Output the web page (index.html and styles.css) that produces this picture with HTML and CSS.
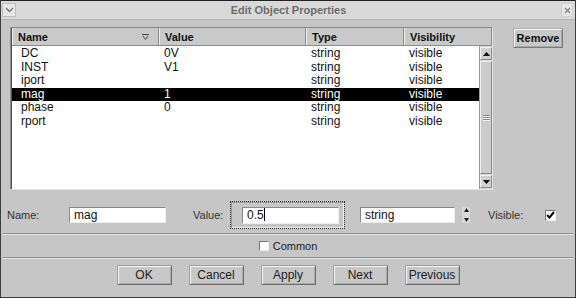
FILE: index.html
```html
<!DOCTYPE html>
<html lang="en">
<head>
  <meta charset="UTF-8">
  <title>Edit Object Properties</title>
  <link rel="stylesheet" href="styles.css">
</head>
<body>
  <div class="window">
    <div class="titlebar">
      <span class="tb-btn">
        <svg width="9" height="6" viewBox="0 0 9 6"><path d="M1 1 L4.5 4.5 L8 1" fill="none" stroke="#777" stroke-width="1.4"/></svg>
      </span>
      <span class="title">Edit Object Properties</span>
      <span class="tb-btn close">
        <svg width="7" height="7" viewBox="0 0 7 7"><path d="M1 1 L6 6 M6 1 L1 6" stroke="#888" stroke-width="1.3"/></svg>
      </span>
    </div>

    <div class="content">
      <div class="top-row">
        <div class="table">
          <div class="thead">
            <div class="th th-name">Name
              <svg class="sort" width="7" height="6" viewBox="0 0 7 6"><path d="M0 0.5 H7 M1 2 L3.5 5.5 L6 2" fill="none" stroke="#444" stroke-width="1"/></svg>
            </div>
            <div class="th">Value</div>
            <div class="th">Type</div>
            <div class="th last">Visibility</div>
          </div>
          <div class="tbody">
            <div class="rows">
              <div class="row"><span class="c-name">DC</span><span>0V</span><span>string</span><span>visible</span></div>
              <div class="row"><span class="c-name">INST</span><span>V1</span><span>string</span><span>visible</span></div>
              <div class="row"><span class="c-name">iport</span><span></span><span>string</span><span>visible</span></div>
              <div class="row selected"><span class="c-name">mag</span><span>1</span><span>string</span><span>visible</span></div>
              <div class="row"><span class="c-name">phase</span><span>0</span><span>string</span><span>visible</span></div>
              <div class="row"><span class="c-name">rport</span><span></span><span>string</span><span>visible</span></div>
            </div>
            <div class="scrollbar">
              <div class="sb-arrow">
                <svg width="7" height="4" viewBox="0 0 7 4"><path d="M0 4 L3.5 0 L7 4 Z" fill="#000"/></svg>
              </div>
              <div class="sb-thumb">
                <span class="grip"></span><span class="grip"></span><span class="grip"></span>
              </div>
              <div class="sb-arrow">
                <svg width="7" height="4" viewBox="0 0 7 4"><path d="M0 0 L3.5 4 L7 0 Z" fill="#000"/></svg>
              </div>
            </div>
          </div>
        </div>
        <button class="btn remove">Remove</button>
      </div>

      <div class="fields">
        <label class="lbl lbl-name">Name:</label>
        <div class="input name-input">mag</div>
        <label class="lbl lbl-value">Value:</label>
        <div class="focus-frame">
          <div class="input value-input">0.5<span class="caret"></span></div>
        </div>
        <div class="input type-input">string</div>
        <div class="spin">
          <svg width="5" height="4" viewBox="0 0 5 4"><path d="M0 4 L2.5 0 L5 4 Z" fill="#222"/></svg>
          <svg width="5" height="4" viewBox="0 0 5 4"><path d="M0 0 L2.5 4 L5 0 Z" fill="#222"/></svg>
        </div>
        <label class="lbl lbl-visible">Visible:</label>
        <span class="check">
          <svg width="9" height="8" viewBox="0 0 9 8"><path d="M1 4 L3.5 6.5 L8 1" fill="none" stroke="#000" stroke-width="2"/></svg>
        </span>
      </div>

      <div class="sep"></div>

      <div class="common-row">
        <span class="box"></span>
        <span>Common</span>
      </div>

      <div class="sep"></div>

      <div class="buttons">
        <button class="btn">OK</button>
        <button class="btn">Cancel</button>
        <button class="btn">Apply</button>
        <button class="btn">Next</button>
        <button class="btn">Previous</button>
      </div>
    </div>
  </div>
</body>
</html>
```

FILE: styles.css
```css
body {
  margin: 0;
  font-family: "Liberation Sans", Arial, sans-serif;
  color: #222;
  background: #c6c6c6;
}

.window {
  width: 576px;
  height: 298px;
  box-sizing: border-box;
  border: 1px solid #3c3c3c;
  border-top-color: #222;
  background: #c6c6c6;
  display: flex;
  flex-direction: column;
}

.titlebar {
  height: 18px;
  background: #d9d9d9;
  border-bottom: 1px solid #b4b4b4;
  display: flex;
  align-items: center;
  justify-content: space-between;
  padding: 0 2px 0 1px;
}

.tb-btn {
  width: 14px;
  height: 14px;
  box-sizing: border-box;
  border: 1px solid #bdbdbd;
  background: #e6e6e6;
  display: flex;
  align-items: center;
  justify-content: center;
}

.tb-btn.close {
  width: 12px;
  border-color: #d0d0d0;
}

.title {
  font-size: 11px;
  font-weight: bold;
  color: #6c6c6c;
}

.content {
  padding: 0 6px;
  flex: 1;
  display: flex;
  flex-direction: column;
}

/* list + remove */
.top-row {
  display: flex;
  align-items: flex-start;
  margin-top: 7px;
}

.table {
  width: 483px;
  height: 163px;
  margin-left: 3px;
  box-sizing: border-box;
  border: 1px solid #8a8a8a;
  border-right-color: #e4e4e4;
  border-bottom-color: #e4e4e4;
  box-shadow: inset 1px 1px 0 #555;
  display: flex;
  flex-direction: column;
  background: #fff;
}

.thead {
  display: grid;
  grid-template-columns: 147px 147px 98px 1fr;
  height: 17px;
  background: #c9c9c9;
  border-bottom: 1px solid #8c8c8c;
  margin-left: 1px;
}

.th {
  font-size: 11px;
  font-weight: bold;
  color: #111;
  padding-left: 5px;
  display: flex;
  align-items: center;
  border-left: 1px solid #ececec;
  border-right: 1px solid #8c8c8c;
}

.th-name {
  justify-content: space-between;
  padding-right: 9px;
}

.sort {
  margin-top: 1px;
}

.tbody {
  flex: 1;
  display: flex;
  min-height: 0;
}

.rows {
  flex: 1;
  padding-top: 1px;
  margin-left: 1px;
}

.row {
  display: grid;
  grid-template-columns: 147px 147px 98px 1fr;
  height: 13.5px;
  font-size: 12px;
  line-height: 13.5px;
  color: #111;
}

.row span {
  padding-left: 5px;
  white-space: nowrap;
}

.row .c-name {
  padding-left: 9px;
}

.row.selected {
  background: #000;
  color: #fff;
}

.scrollbar {
  width: 13px;
  box-sizing: border-box;
  border-left: 1px solid #9a9a9a;
  background: #d6d6d6;
  display: flex;
  flex-direction: column;
  padding: 1px 0;
}

.sb-arrow {
  height: 11px;
  display: flex;
  align-items: center;
  justify-content: center;
  background: #d0d0d0;
  border: 1px solid;
  border-color: #f2f2f2 #8a8a8a #8a8a8a #f2f2f2;
}

.sb-thumb {
  flex: 1;
  background: #cbcbcb;
  border: 1px solid;
  border-color: #f0f0f0 #8a8a8a #8a8a8a #f0f0f0;
  margin: 1px 0;
  display: flex;
  flex-direction: column;
  align-items: center;
  justify-content: center;
  gap: 1px;
}

.grip {
  width: 7px;
  height: 1px;
  background: #8a8a8a;
  box-shadow: 0 1px 0 #f0f0f0;
}

.btn {
  font-family: "Liberation Sans", Arial, sans-serif;
  font-size: 12px;
  color: #222;
  background: #c8c8c8;
  border: 1px solid;
  border-color: #9c9c9c #6e6e6e #6e6e6e #9c9c9c;
  box-shadow: inset 1px 1px 0 #f4f4f4, inset -1px -1px 0 #a8a8a8;
  padding: 0;
  height: 20px;
  width: 55px;
}

.remove {
  margin-left: 20px;
  margin-top: 1px;
  width: 50px;
  font-size: 11px;
  font-weight: bold;
  color: #111;
  border-color: #b0b0b0 #7a7a7a #7a7a7a #b0b0b0;
}

/* edit fields */
.fields {
  display: flex;
  align-items: center;
  height: 28px;
  margin-top: 11px;
  font-size: 11px;
}

.lbl {
  color: #333;
}

.lbl-name {
  width: 62px;
}

.lbl-value {
  margin-left: 27px;
  width: 37px;
}

.lbl-visible {
  margin-left: 18px;
  width: 57px;
}

.input {
  height: 16px;
  box-sizing: border-box;
  background: #fff;
  border: 1px solid;
  border-color: #8a8a8a #eeeeee #eeeeee #8a8a8a;
  font-size: 12px;
  line-height: 14px;
  padding-left: 4px;
  color: #111;
}

.name-input {
  width: 97px;
}

.focus-frame {
  width: 115px;
  height: 28px;
  box-sizing: border-box;
  border: 1px dotted #333;
  box-shadow: inset 1px 1px 0 #999, inset -1px -1px 0 #eee;
  display: flex;
  align-items: center;
  padding-left: 11px;
}

.value-input {
  width: 97px;
  height: 17px;
}

.caret {
  display: inline-block;
  width: 1px;
  height: 13px;
  background: #000;
  vertical-align: -2px;
}

.type-input {
  margin-left: 15px;
  width: 95px;
}

.spin {
  margin-left: 7px;
  width: 8px;
  height: 16px;
  display: flex;
  flex-direction: column;
  align-items: center;
  justify-content: space-between;
  padding: 1px 0;
  box-sizing: border-box;
  background: #d8d8d8;
}

.check {
  width: 11px;
  height: 11px;
  box-sizing: border-box;
  background: #fff;
  border: 1px solid;
  border-color: #777 #eee #eee #777;
  display: flex;
  align-items: center;
  justify-content: center;
}

.sep {
  height: 1px;
  background: #8c8c8c;
  border-bottom: 1px solid #e6e6e6;
  margin: 0 -4px;
}

.fields + .sep {
  margin-top: 4px;
}

.common-row {
  height: 22px;
  display: flex;
  align-items: center;
  justify-content: center;
  gap: 4px;
  font-size: 11px;
  color: #222;
}

.box {
  width: 10px;
  height: 10px;
  box-sizing: border-box;
  background: #fff;
  border: 1px solid;
  border-color: #777 #eee #eee #777;
}

.buttons {
  display: flex;
  justify-content: center;
  gap: 17px;
  margin-top: 6px;
}
```
